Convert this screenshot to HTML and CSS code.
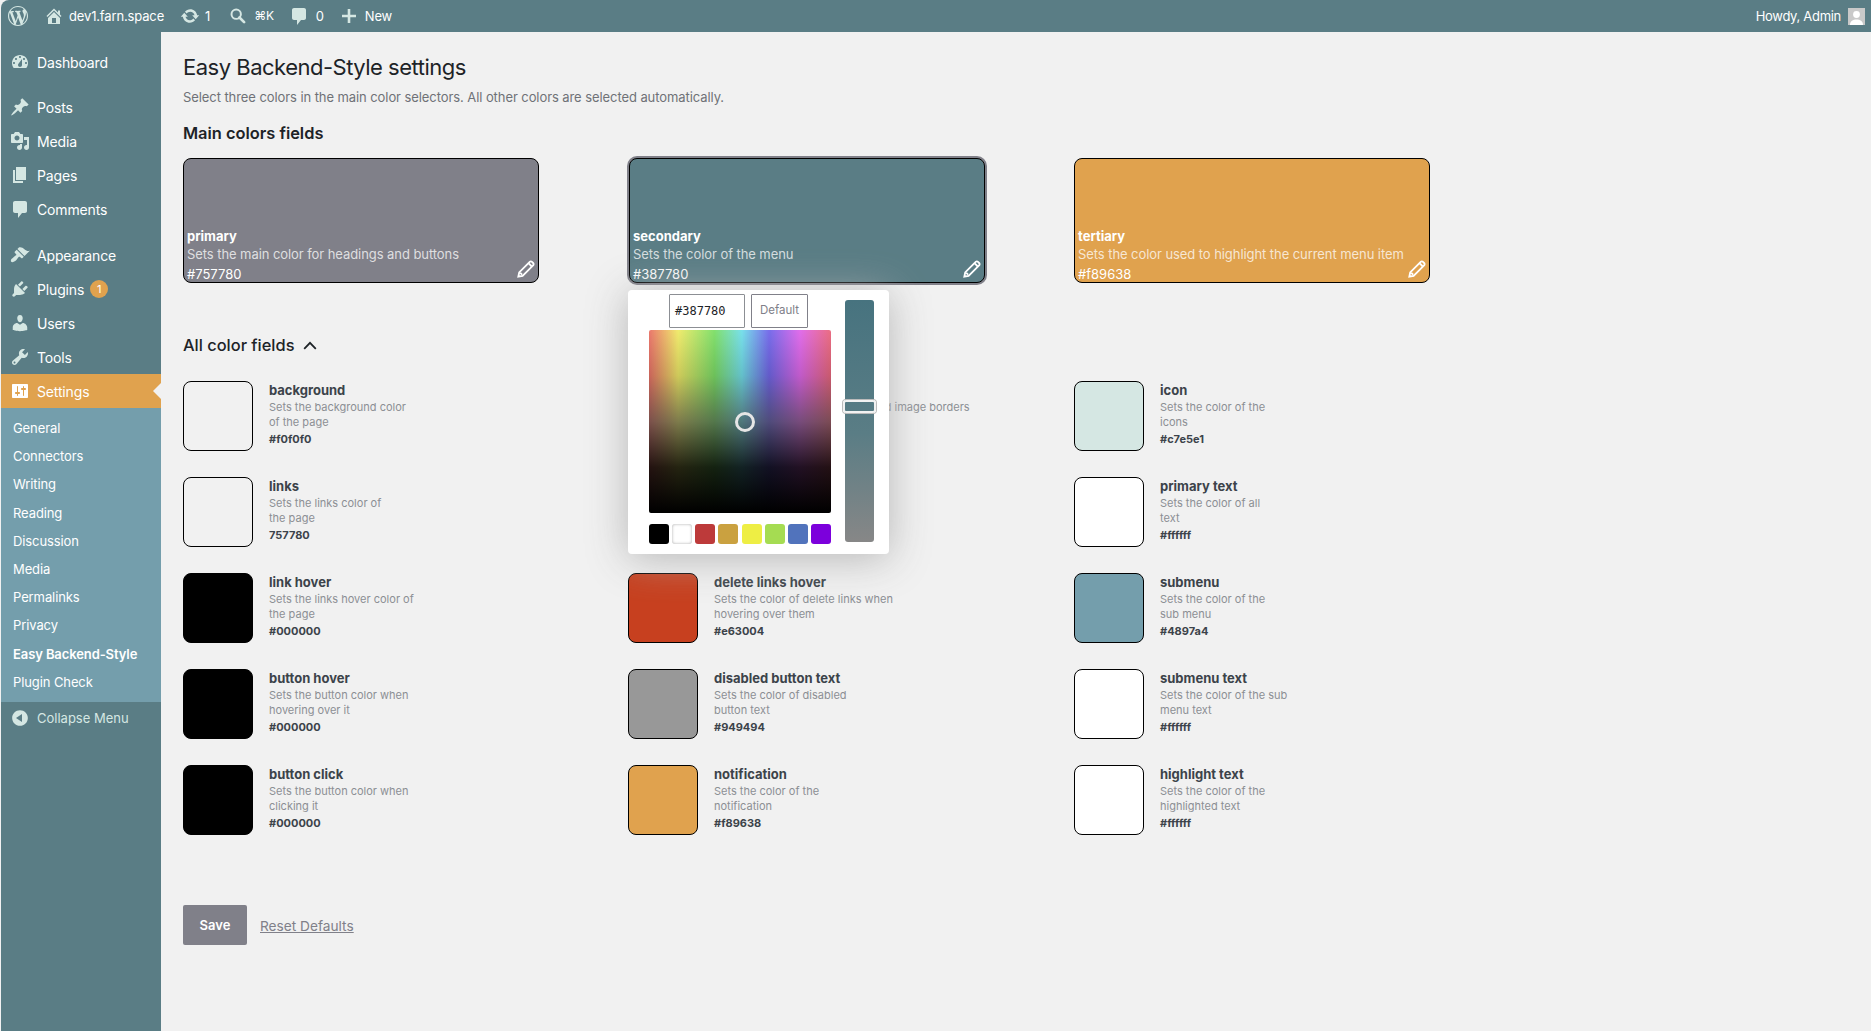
FILE: index.html
```html
<!DOCTYPE html>
<html lang="en">
<head>
  <meta charset="UTF-8">
  <meta name="viewport" content="width=device-width, initial-scale=1.0">
  <title>Easy Backend-Style settings</title>
  <link rel="stylesheet" href="styles.css">
</head>
<body>
  <header class="topbar">
    <svg class="bar-icon logo" viewBox="0 0 20 20"><path d="M20 10c0-5.51-4.49-10-10-10C4.48 0 0 4.49 0 10c0 5.52 4.48 10 10 10 5.51 0 10-4.48 10-10zM7.78 15.37L4.37 6.22c.55-.02 1.17-.08 1.17-.08.5-.06.44-1.13-.06-1.11 0 0-1.45.11-2.37.11-.18 0-.37 0-.58-.01C4.12 2.69 6.87 1.11 10 1.11c2.33 0 4.45.87 6.05 2.34-.68-.11-1.65.39-1.65 1.58 0 .74.45 1.36.9 2.1.35.61.55 1.36.55 2.46 0 1.49-1.4 5-1.4 5l-3.03-8.37c.54-.02.82-.17.82-.17.5-.05.44-1.25-.06-1.22 0 0-1.44.12-2.38.12-.87 0-2.33-.12-2.33-.12-.5-.03-.56 1.2-.06 1.22l.92.08 1.26 3.41zM17.41 10c.24-.64.74-1.87.43-4.25.7 1.29 1.05 2.71 1.05 4.25 0 3.29-1.73 6.24-4.4 7.78.97-2.59 1.94-5.2 2.92-7.78zM6.1 18.09C3.12 16.65 1.11 13.53 1.11 10c0-1.3.23-2.48.72-3.59C3.25 10.3 4.67 14.2 6.1 18.09zm4.03-6.63l2.58 6.98c-.86.29-1.76.45-2.71.45-.79 0-1.57-.11-2.29-.33.81-2.38 1.62-4.74 2.42-7.1z"/></svg>
    <svg class="bar-icon home" viewBox="0 0 20 20"><path d="M16 8.5l1.53 1.53-1.06 1.06L10 4.62l-6.47 6.47-1.06-1.06L10 2.5l4 4v-2h2v4zm-6-2.46l6 5.99V18H4v-5.97zM12 17v-5H8v5h4z"/></svg>
    <span class="bar-text site">dev1.farn.space</span>
    <svg class="bar-icon update" viewBox="0 0 20 20"><path d="M10.2 3.28c3.53 0 6.43 2.61 6.92 6h2.08l-3.5 4-3.5-4h2.32c-.45-1.97-2.21-3.45-4.32-3.45-1.45 0-2.73.71-3.54 1.78L4.95 5.66C6.23 4.2 8.11 3.28 10.2 3.28zm-.4 13.44c-3.52 0-6.43-2.61-6.92-6H.8l3.5-4c1.17 1.33 2.33 2.67 3.5 4H5.48c.45 1.97 2.21 3.45 4.32 3.45 1.45 0 2.73-.71 3.54-1.78l1.71 1.95c-1.28 1.46-3.15 2.38-5.25 2.38z"/></svg>
    <span class="bar-text count-update">1</span>
    <svg class="bar-icon search" viewBox="0 0 20 20"><circle cx="8" cy="8" r="5.2" fill="none" stroke="currentColor" stroke-width="2.2"/><path d="M11.6 11.6l5.2 5.2" stroke="currentColor" stroke-width="3" stroke-linecap="round"/></svg>
    <span class="bar-text shortcut">⌘K</span>
    <svg class="bar-icon comment" viewBox="0 0 20 20"><path d="M5 2h10c1.1 0 2 .9 2 2v8c0 1.1-.9 2-2 2h-3l-4 5v-5H5c-1.1 0-2-.9-2-2V4c0-1.1.9-2 2-2z"/></svg>
    <span class="bar-text count-comment">0</span>
    <svg class="bar-icon plus" viewBox="0 0 20 20"><path d="M17 8.7v2.6h-5.700V17H8.700v-5.700H3V8.700h5.700V3h2.600v5.700H17z"/></svg>
    <span class="bar-text">New</span>
    <span class="bar-text howdy">Howdy, Admin</span>
    <span class="avatar">
      <svg viewBox="0 0 17 17"><rect width="17" height="17" fill="#c9c9c9"/><circle cx="8.500" cy="6.500" r="3.400" fill="#fff"/><path d="M2 17c0-4 3-5.500 6.500-5.500S15 13 15 17z" fill="#fff"/></svg>
    </span>
  </header>

  <div class="layout">
    <nav class="sidebar">
      <ul class="menu">
        <li class="menu-item"><svg viewBox="0 0 20 20"><path fill-rule="evenodd" d="M3.760 16h12.480c1.100-1.370 1.760-3.110 1.760-5 0-4.420-3.580-8-8-8s-8 3.580-8 8c0 1.890.660 3.630 1.760 5zM10 4c.550 0 1 .450 1 1s-.450 1-1 1-1-.450-1-1 .450-1 1-1zM6 6c.550 0 1 .450 1 1s-.450 1-1 1-1-.450-1-1 .450-1 1-1zm8 0c.550 0 1 .450 1 1s-.450 1-1 1-1-.450-1-1 .450-1 1-1zm-5.370 5.550L12 7v6c0 1.100-.900 2-2 2s-2-.900-2-2c0-.570.240-1.080.630-1.450zM4 10c.550 0 1 .450 1 1s-.450 1-1 1-1-.450-1-1 .450-1 1-1zm12 0c.550 0 1 .450 1 1s-.450 1-1 1-1-.450-1-1 .450-1 1-1z"/></svg>Dashboard</li>
      </ul>
      <ul class="menu menu-middle">
        <li class="menu-item"><svg viewBox="0 0 20 20"><path d="M10.440 3.020l1.820-1.820 6.360 6.350-1.830 1.820c-1.050-.680-2.480-.570-3.410.360l-.750.750c-.920.930-1.040 2.350-.350 3.410l-1.830 1.820-2.410-2.410-2.800 2.790c-.420.420-3.380 2.710-3.800 2.290s1.860-3.390 2.280-3.810l2.790-2.790L4.100 9.360l1.830-1.820c1.050.690 2.480.570 3.400-.360l.750-.750c.930-.920 1.050-2.350.360-3.410z"/></svg>Posts</li>
        <li class="menu-item"><svg viewBox="0 0 20 20"><path fill-rule="evenodd" d="M13 11V4c0-.550-.450-1-1-1h-1.670L9 1H5L3.670 3H2c-.550 0-1 .450-1 1v7c0 .550.450 1 1 1h10c.550 0 1-.450 1-1zM7 4.500c1.380 0 2.500 1.120 2.500 2.500S8.380 9.500 7 9.500 4.500 8.380 4.500 7 5.620 4.500 7 4.500zM14 6h5v10.500c0 1.380-1.120 2.500-2.500 2.500S14 17.880 14 16.500s1.120-2.500 2.500-2.500c.170 0 .340.020.500.050V9h-3V6zm-4 8.050V13h2v3.500c0 1.380-1.120 2.500-2.500 2.500S7 17.880 7 16.500 8.120 14 9.500 14c.170 0 .340.020.500.050z"/></svg>Media</li>
        <li class="menu-item"><svg viewBox="0 0 20 20"><path d="M6 15V2h10v13H6zm-1 1h8v2H3V5h2v11z"/></svg>Pages</li>
        <li class="menu-item"><svg viewBox="0 0 20 20"><path d="M5 2h10c1.100 0 2 .900 2 2v8c0 1.100-.900 2-2 2h-3l-4 5v-5H5c-1.100 0-2-.900-2-2V4c0-1.100.900-2 2-2z"/></svg>Comments</li>
      </ul>
      <ul class="menu menu-last">
        <li class="menu-item"><svg viewBox="0 0 20 20"><path d="M14.480 11.060L7.410 3.990l1.500-1.500c.500-.560 2.300-.470 3.510.320 1.210.800 1.430 1.280 2.910 2.100 1.180.640 2.450 1.260 4.450.850zm-.710.710L6.700 4.700 4.930 6.470c-.390.390-.390 1.020 0 1.410l1.060 1.060c.390.390.390 1.030 0 1.420-.600.600-1.430 1.110-2.210 1.690-.350.260-.700.530-1.010.840C1.430 13.230.180 15.650 1.200 16.800c1.030 1.020 3.570-.270 4.930-1.620.310-.310.580-.660.840-1.010.580-.780 1.090-1.610 1.690-2.210.390-.390 1.020-.390 1.410 0l1.070 1.060c.390.390 1.020.390 1.410 0z"/></svg>Appearance</li>
        <li class="menu-item"><svg viewBox="0 0 20 20"><path d="M13.110 4.360L9.870 7.600 8 5.730l3.240-3.240c.350-.340 1.050-.200 1.560.320.520.510.660 1.210.310 1.550zm-8 1.770l.910-1.120 9.010 9.010-1.190.840c-.710.710-2.630 1.160-3.820 1.160H6.140L4.900 17.260c-.590.590-1.540.590-2.120 0-.590-.580-.590-1.530 0-2.120l1.240-1.240v-3.880c0-1.130.400-3.190 1.090-3.890zm7.260 3.970l3.240-3.240c.340-.350 1.040-.210 1.550.310.520.510.660 1.210.310 1.550l-3.240 3.250z"/></svg>Plugins<span class="badge">1</span></li>
        <li class="menu-item"><svg viewBox="0 0 20 20"><path d="M10 9.250c-2.270 0-2.730-3.440-2.730-3.440C7 4.020 7.820 2 9.970 2c2.160 0 2.980 2.020 2.710 3.810 0 0-.410 3.440-2.680 3.440zm0 2.570L12.720 10c2.390 0 4.520 2.330 4.520 4.530v2.490s-3.650 1.130-7.240 1.130c-3.650 0-7.240-1.130-7.240-1.130v-2.490c0-2.250 1.940-4.480 4.470-4.480z"/></svg>Users</li>
        <li class="menu-item"><svg viewBox="0 0 20 20"><path fill-rule="evenodd" d="M16.680 9.770c-1.340 1.340-3.300 1.670-4.950.990l-5.410 6.520c-.990.990-2.590.990-3.580 0s-.990-2.590 0-3.570l6.520-5.420c-.680-1.650-.350-3.610.990-4.950 1.280-1.280 3.120-1.620 4.720-1.060l-2.890 2.890 2.820 2.820 2.860-2.870c.530 1.580.180 3.390-1.080 4.650zM3.810 16.210c.400.390 1.040.390 1.430 0 .400-.400.400-1.040 0-1.430-.390-.400-1.030-.400-1.430 0-.390.390-.390 1.030 0 1.430z"/></svg>Tools</li>
        <li class="menu-item current"><svg viewBox="0 0 20 20"><path fill-rule="evenodd" d="M18 16V4c0-.550-.450-1-1-1H3c-.550 0-1 .450-1 1v12c0 .550.450 1 1 1h14c.550 0 1-.450 1-1zM8 11h1c.550 0 1 .450 1 1s-.450 1-1 1H8v1.500c0 .280-.220.500-.500.500s-.500-.220-.500-.500V13H6c-.550 0-1-.450-1-1s.450-1 1-1h1V5.500c0-.280.220-.500.500-.500s.500.220.500.500V11zm5-2h-1c-.550 0-1-.450-1-1s.450-1 1-1h1V5.500c0-.280.220-.500.500-.500s.500.220.500.500V7h1c.550 0 1 .450 1 1s-.450 1-1 1h-1v5.500c0 .280-.220.500-.500.500s-.500-.220-.500-.500V9z"/></svg>Settings</li>
      </ul>
      <ul class="submenu">
        <li>General</li>
        <li>Connectors</li>
        <li>Writing</li>
        <li>Reading</li>
        <li>Discussion</li>
        <li>Media</li>
        <li>Permalinks</li>
        <li>Privacy</li>
        <li class="active">Easy Backend-Style</li>
        <li>Plugin Check</li>
      </ul>
      <div class="collapse"><svg viewBox="0 0 20 20"><path fill-rule="evenodd" d="M10 2.160c4.330 0 7.840 3.510 7.840 7.840s-3.510 7.840-7.840 7.840S2.160 14.330 2.160 10 5.670 2.160 10 2.160zM12 14V6l-6 4z"/></svg>Collapse Menu</div>
    </nav>

    <main class="content">
      <h1>Easy Backend-Style settings</h1>
      <p class="intro">Select three colors in the main color selectors. All other colors are selected automatically.</p>
      <h2 class="main-title">Main colors fields</h2>

      <section class="main-colors">
        <div class="card card-primary">
          <strong>primary</strong>
          <span class="card-desc">Sets the main color for headings and buttons</span>
          <span class="card-hex">#757780</span>
          <svg class="pencil" viewBox="0 0 18 18"><path d="M1.300 16.700l.900-4.300L12.700 1.900c.700-.700 1.600-.700 2.300 0l1.100 1.100c.700.700.700 1.600 0 2.300L5.600 15.800zM3.300 12.900l1.800 1.800M12 3.700l2.300 2.300"/></svg>
        </div>
        <div class="card card-secondary">
          <strong>secondary</strong>
          <span class="card-desc">Sets the color of the menu</span>
          <span class="card-hex">#387780</span>
          <svg class="pencil" viewBox="0 0 18 18"><path d="M1.300 16.700l.900-4.300L12.700 1.900c.700-.700 1.600-.700 2.300 0l1.100 1.100c.700.700.700 1.600 0 2.300L5.600 15.800zM3.300 12.900l1.800 1.800M12 3.700l2.300 2.300"/></svg>
          <div class="picker">
            <div class="picker-left">
              <div class="picker-top">
                <span class="hex-input">#387780</span>
                <span class="default-btn">Default</span>
              </div>
              <div class="picker-square"><span class="marker"></span></div>
              <div class="palette">
                <span class="chip chip-black"></span>
                <span class="chip chip-white"></span>
                <span class="chip chip-red"></span>
                <span class="chip chip-gold"></span>
                <span class="chip chip-yellow"></span>
                <span class="chip chip-green"></span>
                <span class="chip chip-blue"></span>
                <span class="chip chip-purple"></span>
              </div>
            </div>
            <div class="picker-slider"><span class="slider-handle"></span></div>
          </div>
        </div>
        <div class="card card-tertiary">
          <strong>tertiary</strong>
          <span class="card-desc">Sets the color used to highlight the current menu item</span>
          <span class="card-hex">#f89638</span>
          <svg class="pencil" viewBox="0 0 18 18"><path d="M1.300 16.700l.900-4.300L12.700 1.900c.700-.700 1.600-.700 2.300 0l1.100 1.100c.700.700.700 1.600 0 2.300L5.600 15.800zM3.300 12.900l1.800 1.800M12 3.700l2.300 2.300"/></svg>
        </div>
      </section>

      <h2 class="all-title">All color fields
        <svg class="chevron" viewBox="0 0 14 9"><path d="M1.200 7.800L7 1.800l5.800 6"/></svg>
      </h2>

      <section class="fields">
        <div class="field"><span class="swatch s-bg"></span><div><b>background</b><p>Sets the background color<br>of the page</p><em>#f0f0f0</em></div></div>
        <div class="field"><span class="swatch s-bg"></span><div><b>borders</b><p class="nowrap">Sets the color of inputs, fields and image borders</p><em>#c7e5e1</em></div></div>
        <div class="field"><span class="swatch s-icon"></span><div><b>icon</b><p>Sets the color of the<br>icons</p><em>#c7e5e1</em></div></div>

        <div class="field"><span class="swatch s-bg"></span><div><b>links</b><p>Sets the links color of<br>the page</p><em>757780</em></div></div>
        <div class="field"><span class="swatch s-red"></span><div><b>delete links</b><p>Sets the color of delete<br>links</p><em>#b32d2e</em></div></div>
        <div class="field"><span class="swatch s-white"></span><div><b>primary text</b><p>Sets the color of all<br>text</p><em>#ffffff</em></div></div>

        <div class="field"><span class="swatch s-black"></span><div><b>link hover</b><p>Sets the links hover color of<br>the page</p><em>#000000</em></div></div>
        <div class="field"><span class="swatch s-red"></span><div><b>delete links hover</b><p>Sets the color of delete links when<br>hovering over them</p><em>#e63004</em></div></div>
        <div class="field"><span class="swatch s-sub"></span><div><b>submenu</b><p>Sets the color of the<br>sub menu</p><em>#4897a4</em></div></div>

        <div class="field"><span class="swatch s-black"></span><div><b>button hover</b><p>Sets the button color when<br>hovering over it</p><em>#000000</em></div></div>
        <div class="field"><span class="swatch s-gray"></span><div><b>disabled button text</b><p>Sets the color of disabled<br>button text</p><em>#949494</em></div></div>
        <div class="field"><span class="swatch s-white"></span><div><b>submenu text</b><p>Sets the color of the sub<br>menu text</p><em>#ffffff</em></div></div>

        <div class="field"><span class="swatch s-black"></span><div><b>button click</b><p>Sets the button color when<br>clicking it</p><em>#000000</em></div></div>
        <div class="field"><span class="swatch s-orange"></span><div><b>notification</b><p>Sets the color of the<br>notification</p><em>#f89638</em></div></div>
        <div class="field"><span class="swatch s-white"></span><div><b>highlight text</b><p>Sets the color of the<br>highlighted text</p><em>#ffffff</em></div></div>
      </section>

      <div class="actions">
        <button class="save" type="button">Save</button>
        <a class="reset" href="#">Reset Defaults</a>
      </div>
    </main>
  </div>
</body>
</html>
```

FILE: styles.css
```css
* {
  box-sizing: border-box;
}

html,
body {
  height: 100%;
}

body {
  margin: 0;
  padding-left: 1px;
  overflow: hidden;
  font-family: Inter, "Noto Sans", sans-serif;
  font-size: 13px;
  color: #1d2327;
  background-color: #f1f1f1;
}

ul {
  margin: 0;
  padding: 0;
  list-style: none;
}

/* top bar */
.topbar {
  display: flex;
  align-items: center;
  height: 32px;
  color: #fff;
  border-top-left-radius: 8px;
  background-color: #5a7d85;
}

.bar-icon {
  flex: none;
  fill: currentColor;
  color: #d5e7e3;
}

.logo {
  width: 20px;
  height: 20px;
  margin-left: 7px;
}

.home {
  width: 20px;
  height: 20px;
  margin-left: 16px;
}

.bar-text {
  line-height: 32px;
  white-space: nowrap;
  letter-spacing: -0.2px;
}

.site {
  margin-left: 5px;
  letter-spacing: -0.15px;
}

.update {
  width: 20px;
  height: 20px;
  margin-left: 16px;
}

.count-update {
  margin-left: 5px;
}

.search {
  width: 18px;
  height: 18px;
  margin-left: 19px;
}

.shortcut {
  margin-left: 7px;
  font-size: 12px;
}

.comment {
  width: 20px;
  height: 20px;
  margin-left: 15px;
}

.count-comment {
  margin-left: 7px;
}

.plus {
  width: 20px;
  height: 20px;
  margin-left: 15px;
  margin-right: 6px;
}

.howdy {
  margin-left: auto;
  letter-spacing: -0.3px;
}

.avatar {
  display: block;
  width: 17px;
  height: 17px;
  margin: 0 6px 0 7px;
}

.avatar svg {
  display: block;
}

/* sidebar */
.layout {
  display: flex;
  height: calc(100% - 32px);
}

.sidebar {
  flex: none;
  width: 160px;
  padding-top: 13px;
  color: #fff;
  background-color: #5a7d85;
}

.menu {
  margin-bottom: 11px;
}

.menu-middle {
  margin-bottom: 12px;
}

.menu-last {
  margin-bottom: 0;
}

.menu-item {
  position: relative;
  display: flex;
  align-items: center;
  height: 34px;
  padding-left: 9px;
  font-size: 14px;
  letter-spacing: -0.15px;
}

.menu-item svg {
  flex: none;
  width: 20px;
  height: 20px;
  margin-right: 7px;
  fill: #d5e7e3;
}

.menu-item.current {
  background-color: #e0a24e;
}

.menu-item.current svg {
  fill: #fff;
}

.menu-item.current::after {
  content: "";
  position: absolute;
  right: 0;
  top: 50%;
  margin-top: -8px;
  border: 8px solid transparent;
  border-right-color: #f1f1f1;
}

.badge {
  width: 18px;
  height: 18px;
  margin-left: 6px;
  font-size: 11px;
  line-height: 18px;
  text-align: center;
  border-radius: 50%;
  background-color: #e0a24e;
}

.submenu {
  padding: 6px 0;
  background-color: #749eac;
}

.submenu li {
  height: 28.2px;
  padding-left: 12px;
  line-height: 28.2px;
  letter-spacing: -0.1px;
}

.submenu .active {
  font-weight: 600;
}

.collapse {
  display: flex;
  align-items: center;
  height: 32px;
  padding-left: 9px;
  color: #d5e7e3;
}

.collapse svg {
  flex: none;
  width: 20px;
  height: 20px;
  margin-right: 7px;
  fill: #d5e7e3;
}

/* content */
.content {
  flex: 1;
  padding: 0 0 0 22px;
}

h1 {
  margin: 20px 0 0;
  font-size: 22px;
  font-weight: 400;
  line-height: 30px;
  letter-spacing: -0.5px;
}

.intro {
  margin: 5px 0 0;
  color: #6f7177;
  line-height: 20px;
  letter-spacing: -0.08px;
}

.main-title {
  margin: 14px 0 0;
  font-size: 16.4px;
  font-weight: 600;
  line-height: 24px;
}

.main-colors {
  display: grid;
  grid-template-columns: 446px 445px 356px;
  margin-top: 13px;
}

.card {
  position: relative;
  display: flex;
  flex-direction: column;
  justify-content: flex-end;
  width: 356px;
  height: 125px;
  padding: 0 3px;
  color: #fff;
  border: 1px solid #000;
  border-radius: 8px;
}

.card strong {
  font-size: 13px;
  font-weight: 700;
  line-height: 18px;
}

.card-desc {
  color: rgba(255, 255, 255, 0.75);
  line-height: 19px;
  letter-spacing: -0.07px;
}

.card-hex {
  margin-bottom: -2px;
  line-height: 20px;
}

.card-primary {
  background-color: #808089;
}

.card-secondary {
  background-color: #5a7d85;
  box-shadow: 0 0 0 2px #808089;
}

.card-tertiary {
  background-color: #e0a24e;
}

.pencil {
  position: absolute;
  right: 3px;
  bottom: 4px;
  width: 18px;
  height: 18px;
  fill: none;
  stroke: #fff;
  stroke-width: 1.8;
}

/* colour picker */
.picker {
  position: absolute;
  z-index: 2;
  top: 131px;
  left: -2px;
  display: flex;
  width: 261px;
  height: 264px;
  padding: 4px 0 0 21px;
  color: #1d2327;
  border-radius: 4px;
  background-color: #fff;
  box-shadow: 0 4px 40px rgba(175, 175, 175, 0.9);
}

.picker-left {
  width: 182px;
}

.picker-top {
  display: flex;
  gap: 6px;
  height: 34px;
  margin: 0 0 2px 20px;
}

.hex-input {
  width: 76px;
  padding-left: 5px;
  font-family: "DejaVu Sans Mono", monospace;
  font-size: 12px;
  line-height: 33px;
  border: 1px solid #8c8f94;
  border-radius: 1px;
}

.default-btn {
  width: 57px;
  font-size: 11.5px;
  line-height: 30px;
  text-align: center;
  color: #808089;
  border: 1px solid #808089;
  border-radius: 1px;
}

.picker-square {
  position: relative;
  height: 183px;
  border-radius: 2px;
  background-image:
    linear-gradient(to bottom, rgba(255, 255, 255, 0.35) 0, rgba(170, 170, 170, 0.42) 25%, rgba(90, 90, 90, 0.75) 50%, rgba(15, 15, 15, 0.9) 75%, #000 100%),
    linear-gradient(to right, #e03020 0, #e8e020 16%, #40d020 36%, #30d0e0 51%, #3020e0 66%, #d020e0 83%, #e02040 100%);
}

.marker {
  position: absolute;
  left: 86px;
  top: 82px;
  width: 20px;
  height: 20px;
  border: 3px solid #e6e6e6;
  border-radius: 50%;
}

.palette {
  display: flex;
  justify-content: space-between;
  margin-top: 11px;
}

.chip {
  width: 20px;
  height: 20px;
  border-radius: 3px;
}

.chip-black { background-color: #000; }
.chip-white { background-color: #fff; box-shadow: inset 0 0 3px #aaa; }
.chip-red { background-color: #bd3a3a; }
.chip-gold { background-color: #caa140; }
.chip-yellow { background-color: #eeee44; }
.chip-green { background-color: #a5dc52; }
.chip-blue { background-color: #5173bc; }
.chip-purple { background-color: #7c00dc; }

.picker-slider {
  position: relative;
  width: 29px;
  height: 242px;
  margin: 6px 0 0 14px;
  border-radius: 3px;
  background-image: linear-gradient(to bottom, #47737f 0, #5a7d85 55%, #878787 100%);
}

.slider-handle {
  position: absolute;
  top: 100px;
  left: -2px;
  width: 33px;
  height: 13px;
  border: 2px solid #f2f2f2;
  border-radius: 3px;
  box-shadow: 0 0 0 1px #bbb;
}

/* all colour fields */
.all-title {
  display: flex;
  align-items: center;
  gap: 9px;
  margin: 50px 0 0;
  font-size: 16.4px;
  font-weight: 500;
  line-height: 24px;
}

.chevron {
  width: 14px;
  height: 9px;
  fill: none;
  stroke: #1d2327;
  stroke-width: 1.8;
}

.fields {
  display: grid;
  grid-template-columns: 445px 446px 356px;
  row-gap: 26px;
  margin-top: 24px;
}

.field {
  display: flex;
  gap: 16px;
  height: 70px;
}

.swatch {
  flex: none;
  width: 70px;
  height: 70px;
  border: 1px solid #000;
  border-radius: 8px;
}

.s-bg { background-color: #f1f1f1; }
.s-icon { background-color: #d5e7e3; }
.s-white { background-color: #fff; }
.s-black { background-color: #000; }
.s-red { background-color: #c7401f; }
.s-sub { background-color: #749eac; }
.s-gray { background-color: #989898; }
.s-orange { background-color: #e0a24e; }

.field b {
  display: block;
  margin: 1px 0;
  font-size: 13px;
  font-weight: 700;
  line-height: 17px;
  color: #3c434a;
}

.field p {
  margin: 0;
  font-size: 11px;
  line-height: 15px;
  color: #8c8f94;
}

.field p.nowrap {
  white-space: nowrap;
}

.field em {
  display: block;
  margin-top: 2px;
  font-size: 11px;
  font-style: normal;
  font-weight: 700;
  line-height: 15px;
  color: #3c434a;
}

/* save row */
.actions {
  display: flex;
  align-items: center;
  gap: 13px;
  margin-top: 70px;
}

.save {
  width: 64px;
  height: 40px;
  padding: 0;
  font: 600 13px Inter, sans-serif;
  color: #fff;
  border: 0;
  border-radius: 2px;
  background-color: #808089;
}

.reset {
  margin-top: 2px;
  font-size: 13.7px;
  color: #808089;
}
```
